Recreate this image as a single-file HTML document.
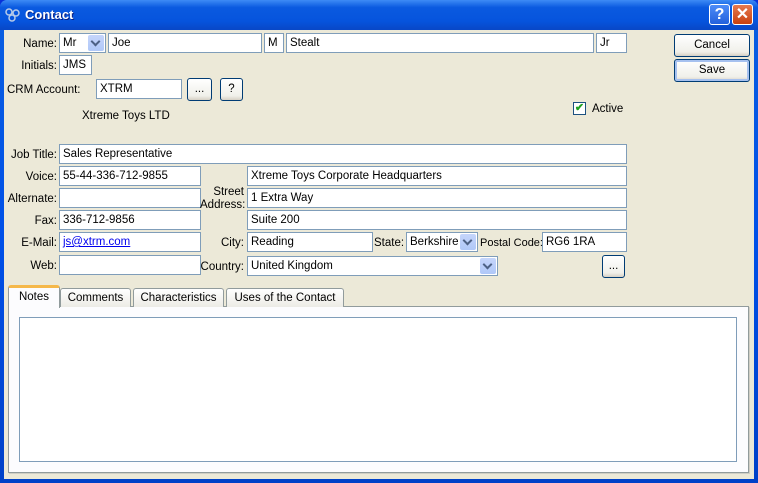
<!DOCTYPE html>
<html><head><style>
*{margin:0;padding:0;box-sizing:border-box}
body{width:758px;height:483px;overflow:hidden;font-family:"Liberation Sans",sans-serif;font-size:11.5px;background:#0831d9;position:relative}
.win{position:absolute;left:0;top:0;width:758px;height:483px;background:linear-gradient(#0a5fe0,#0050e8 50%,#0041c8);border-radius:7px 7px 0 0}
.tb{position:absolute;left:0;top:0;width:758px;height:30px;background:linear-gradient(#3d8bf5,#0a5ae0 25%,#0654dd 70%,#0847c6);border-radius:7px 7px 0 0}
.title{position:absolute;left:25px;top:7px;color:#fff;font-weight:bold;font-size:13px;text-shadow:1px 1px #0a1f80}
.client{position:absolute;left:4px;top:30px;width:750px;height:449px;background:#ece9d8}
.a{position:absolute}
.f{position:absolute;background:#fff;border:1px solid #7f9db9;height:20px;padding:3px 3px;white-space:nowrap;overflow:hidden}
.l{position:absolute;text-align:right;white-space:nowrap;margin-top:1px}
.btn{position:absolute;border:1px solid #003c74;border-radius:3px;background:linear-gradient(#fff,#f0f0ea 80%,#d6d0c5);text-align:center}
.dd{position:absolute;right:1px;top:1px;width:16px;height:16px;background:linear-gradient(#c5d5fb,#b0c8f8);border-radius:2px}
.dd:after{content:"";position:absolute;left:4px;top:3px;width:5px;height:5px;border-right:2px solid #4d6185;border-bottom:2px solid #4d6185;transform:rotate(45deg)}
.tab{position:absolute;top:288px;height:19px;border:1px solid #919b9c;border-bottom:none;border-radius:3px 3px 0 0;background:linear-gradient(#fff,#ecebe5);text-align:center;padding-top:3px}
</style></head><body>
<div class="win"></div>
<div class="tb"></div>
<svg class="a" style="left:5px;top:8px" width="16" height="14"><circle cx="4" cy="4" r="3" fill="none" stroke="#b8cbe8" stroke-width="1.5"/><circle cx="11" cy="5" r="3" fill="none" stroke="#b8cbe8" stroke-width="1.5"/><circle cx="7" cy="10" r="3" fill="none" stroke="#b8cbe8" stroke-width="1.5"/></svg>
<div class="title">Contact</div>
<div class="a" style="left:709px;top:4px;width:21px;height:21px;border:1px solid #fff;border-radius:3px;background:linear-gradient(#4d8cf8,#2360dc);color:#fff;font-weight:bold;font-size:16px;text-align:center;line-height:19px">?</div>
<div class="a" style="left:732px;top:4px;width:21px;height:21px;border:1px solid #fff;border-radius:3px;background:linear-gradient(#e6794f,#c9400f);color:#fff;font-weight:bold;font-size:16px;text-align:center;line-height:19px">✕</div>
<div class="client"></div>

<div class="l" style="left:0;width:57px;top:37px">Name:</div>
<div class="f" style="left:59px;top:33px;width:47px">Mr<div class="dd"></div></div>
<div class="f" style="left:108px;top:33px;width:154px">Joe</div>
<div class="f" style="left:264px;top:33px;width:20px">M</div>
<div class="f" style="left:286px;top:33px;width:308px">Stealt</div>
<div class="f" style="left:596px;top:33px;width:31px">Jr</div>
<div class="l" style="left:0;width:57px;top:59px">Initials:</div>
<div class="f" style="left:59px;top:55px;width:33px">JMS</div>
<div class="l" style="left:7px;top:83px">CRM Account:</div>
<div class="f" style="left:96px;top:79px;width:86px">XTRM</div>
<div class="btn" style="left:187px;top:78px;width:25px;height:23px;line-height:20px">...</div>
<div class="btn" style="left:220px;top:78px;width:23px;height:23px;line-height:20px">?</div>
<div class="l" style="left:82px;top:109px">Xtreme Toys LTD</div>
<div class="btn" style="left:674px;top:34px;width:76px;height:23px;line-height:21px">Cancel</div>
<div class="btn" style="left:674px;top:59px;width:76px;height:23px;line-height:21px;box-shadow:inset 0 0 0 2px #a6c1ef">Save</div>
<div class="a" style="left:573px;top:102px;width:13px;height:13px;border:1px solid #1c5180;background:#fff;color:#21a121;font-size:11px;line-height:11px;text-align:center;font-weight:bold">✔</div>
<div class="l" style="left:592px;top:102px">Active</div>

<div class="l" style="left:0;width:57px;top:148px">Job Title:</div>
<div class="f" style="left:59px;top:144px;width:568px">Sales Representative</div>
<div class="l" style="left:0;width:57px;top:170px">Voice:</div>
<div class="f" style="left:59px;top:166px;width:142px">55-44-336-712-9855</div>
<div class="l" style="left:0;width:57px;top:192px">Alternate:</div>
<div class="f" style="left:59px;top:188px;width:142px"></div>
<div class="l" style="left:0;width:57px;top:214px">Fax:</div>
<div class="f" style="left:59px;top:210px;width:142px">336-712-9856</div>
<div class="l" style="left:0;width:57px;top:236px">E-Mail:</div>
<div class="f" style="left:59px;top:232px;width:142px;color:#00e;text-decoration:underline">js@xtrm.com</div>
<div class="l" style="left:0;width:57px;top:259px">Web:</div>
<div class="f" style="left:59px;top:255px;width:142px"></div>

<div class="f" style="left:247px;top:166px;width:380px">Xtreme Toys Corporate Headquarters</div>
<div class="l" style="left:200px;width:44px;top:185px;line-height:13px">Street<br>Address:</div>
<div class="f" style="left:247px;top:188px;width:380px">1 Extra Way</div>
<div class="f" style="left:247px;top:210px;width:380px">Suite 200</div>
<div class="l" style="left:200px;width:44px;top:236px">City:</div>
<div class="f" style="left:247px;top:232px;width:126px">Reading</div>
<div class="l" style="left:374px;top:236px">State:</div>
<div class="f" style="left:406px;top:232px;width:72px">Berkshire<div class="dd"></div></div>
<div class="l" style="left:480px;top:236px;font-size:11px">Postal Code:</div>
<div class="f" style="left:542px;top:232px;width:85px">RG6 1RA</div>
<div class="l" style="left:200px;width:44px;top:260px">Country:</div>
<div class="f" style="left:247px;top:256px;width:251px">United Kingdom<div class="dd"></div></div>
<div class="btn" style="left:602px;top:255px;width:23px;height:23px;line-height:20px">...</div>

<div class="a" style="left:8px;top:306px;width:741px;height:167px;background:#fcfcfe;border:1px solid #919b9c;box-shadow:1px 1px 0 #d0cec4"></div>
<div class="a" style="left:19px;top:317px;width:718px;height:145px;background:#fff;border:1px solid #7f9db9"></div>
<div class="tab" style="left:60px;width:71px">Comments</div>
<div class="tab" style="left:133px;width:91px">Characteristics</div>
<div class="tab" style="left:226px;width:118px">Uses of the Contact</div>
<div class="tab" style="left:8px;top:285px;width:52px;height:23px;background:#fcfcfe;border-top:3px solid #f5b84a;padding-top:3px">Notes</div>
</body></html>
